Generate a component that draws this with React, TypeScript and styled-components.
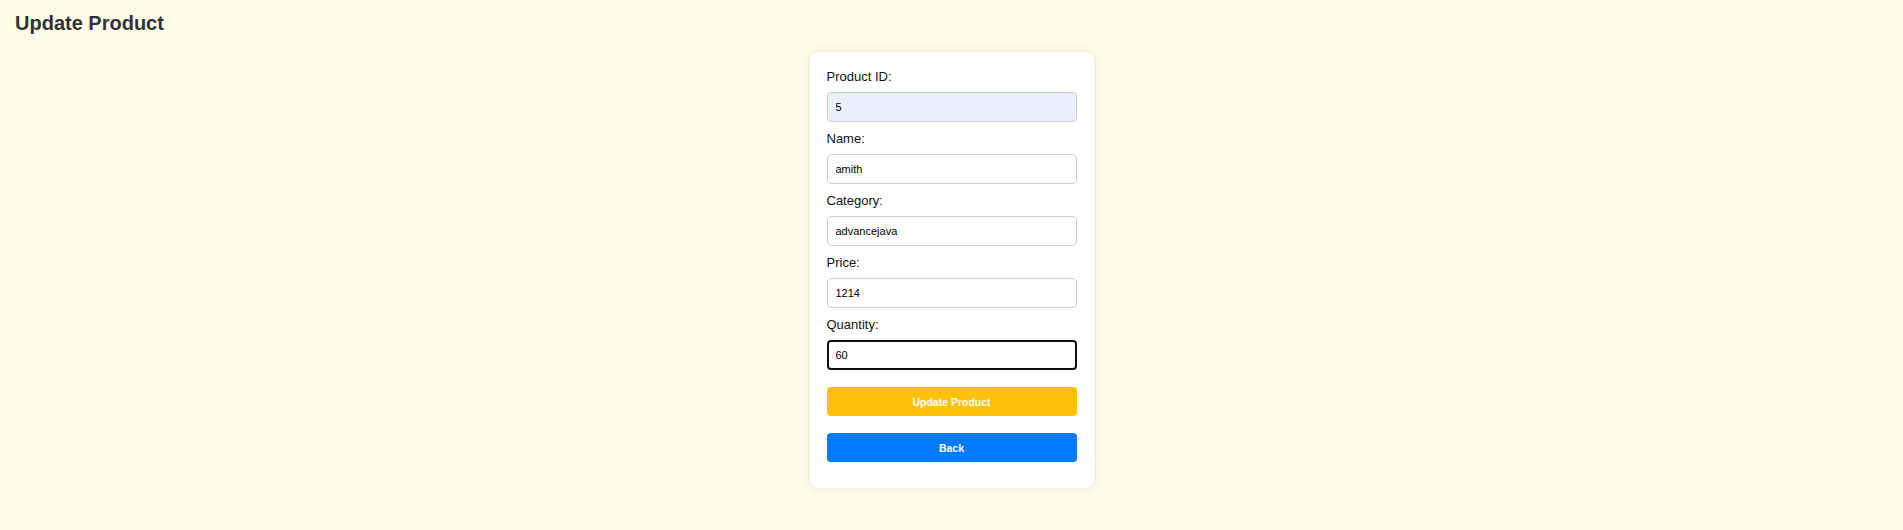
import { useState } from 'react';
import styled, { createGlobalStyle } from 'styled-components';

const GlobalStyle = createGlobalStyle`
  html, body {
    margin: 0;
    padding: 0;
    background: #fffde7;
    font-family: 'Liberation Sans', Arial, sans-serif;
  }
`;

const Page = styled.div`
  min-height: 530px;
  padding: 12px 15px 0;
  box-sizing: border-box;
`;

const Title = styled.h2`
  margin: 0 0 17px;
  font-size: 20px;
  line-height: 23px;
  font-weight: 700;
  color: #333;
`;

const Card = styled.form`
  width: 250px;
  margin: 0 auto;
  padding: 17px;
  background: #fff;
  border-radius: 8px;
  box-shadow: 0 0 10px rgba(0, 0, 0, 0.1);
  display: flex;
  flex-direction: column;
`;

const Label = styled.label`
  display: block;
  font-size: 13px;
  line-height: 15px;
  color: #111;
  margin-bottom: 8px;
`;

const Input = styled.input<{ $filled?: boolean; $focused?: boolean }>`
  box-sizing: border-box;
  width: 100%;
  height: 30px;
  margin: 0 0 9px;
  padding: 0 ${p => (p.$focused ? '7px' : '8px')};
  font-family: 'Liberation Sans', Arial, sans-serif;
  font-size: 11px;
  color: #000;
  background: ${p => (p.$filled ? '#e8f0fe' : '#fff')};
  border: ${p => (p.$focused ? '2px solid #111' : '1px solid #ccc')};
  border-radius: 4px;
  outline: none;
`;

const Button = styled.button<{ $variant: 'warning' | 'primary' }>`
  height: 29px;
  margin: 8px 0 9px;
  border: none;
  border-radius: 4px;
  background: ${p => (p.$variant === 'warning' ? '#ffc107' : '#007bff')};
  color: #fff;
  font-family: 'Liberation Sans', Arial, sans-serif;
  font-size: 10.5px;
  font-weight: 700;
  cursor: pointer;
`;

const fields = [
  { key: 'id', label: 'Product ID:' },
  { key: 'name', label: 'Name:' },
  { key: 'category', label: 'Category:' },
  { key: 'price', label: 'Price:' },
  { key: 'quantity', label: 'Quantity:' },
];

export default function App() {
  const [product, setProduct] = useState<Record<string, string>>({
    id: '5',
    name: 'amith',
    category: 'advancejava',
    price: '1214',
    quantity: '60',
  });

  return (
    <Page>
      <GlobalStyle />
      <Title>Update Product</Title>
      <Card onSubmit={e => e.preventDefault()}>
        {fields.map(f => (
          <div key={f.key}>
            <Label htmlFor={f.key}>{f.label}</Label>
            <Input
              id={f.key}
              value={product[f.key]}
              $filled={f.key === 'id'}
              $focused={f.key === 'quantity'}
              readOnly={f.key === 'id'}
              onChange={e => setProduct({ ...product, [f.key]: e.target.value })}
            />
          </div>
        ))}
        <Button type="submit" $variant="warning">
          Update Product
        </Button>
        <Button type="button" $variant="primary">
          Back
        </Button>
      </Card>
    </Page>
  );
}
